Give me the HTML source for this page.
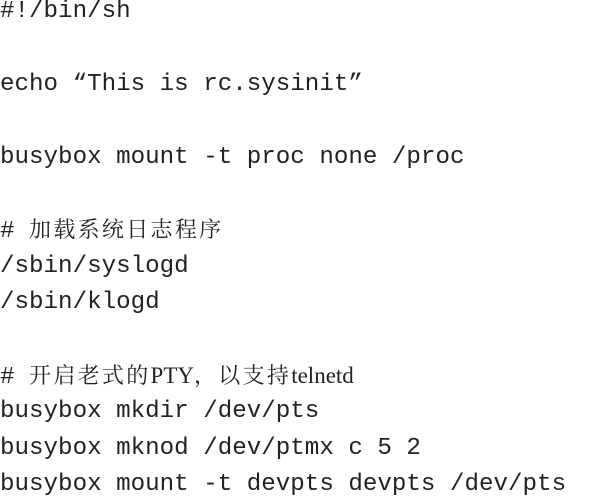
<!DOCTYPE html>
<html><head><meta charset="utf-8"><style>
html,body{margin:0;padding:0;background:#fff;width:608px;height:497px;overflow:hidden}
.w{position:absolute;left:0;top:-6px;font-family:"Liberation Mono",monospace;font-size:24.2px;line-height:36.4px;color:#222}
.w div{height:36.4px;white-space:pre}
.c{font-family:"Liberation Serif","Noto Serif CJK SC",serif;font-size:22px}
.k{letter-spacing:2.3px}
.l{font-size:23px}
</style></head><body><div class="w"><div>#!/bin/sh</div><div> </div><div>echo “This is rc.sysinit”</div><div> </div><div>busybox mount -t proc none /proc</div><div> </div><div># <span class="c k">加载系统日志程序</span></div><div>/sbin/syslogd</div><div>/sbin/klogd</div><div> </div><div># <span class="c"><span class="k">开启老式的</span><span class="l">PTY</span><span class="k">，以支持</span><span class="l">telnetd</span></span></div><div>busybox mkdir /dev/pts</div><div>busybox mknod /dev/ptmx c 5 2</div><div>busybox mount -t devpts devpts /dev/pts</div></div></body></html>
